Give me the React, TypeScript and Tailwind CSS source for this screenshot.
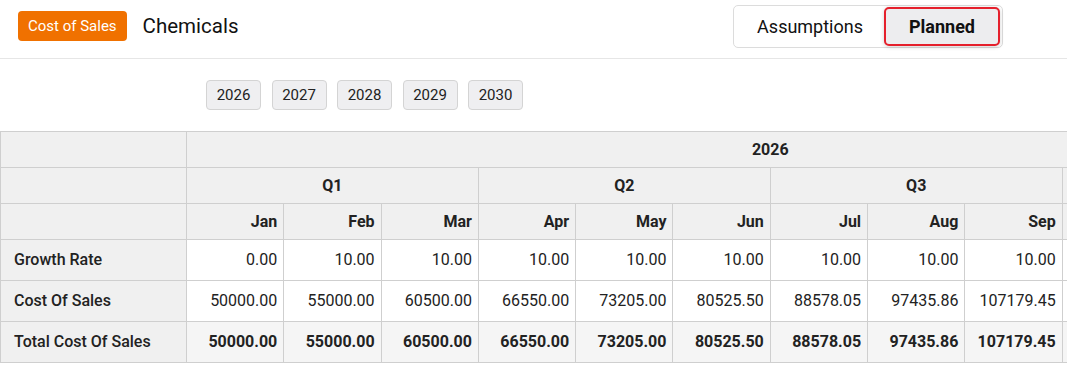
import React from "react";

const months = ["Jan", "Feb", "Mar", "Apr", "May", "Jun", "Jul", "Aug", "Sep", "Oct", "Nov", "Dec"];
const quarters = ["Q1", "Q2", "Q3", "Q4"];
const years = ["2026", "2027", "2028", "2029", "2030"];

const growth = ["0.00", "10.00", "10.00", "10.00", "10.00", "10.00", "10.00", "10.00", "10.00", "10.00", "10.00", "10.00"];
const cost = [
  "50000.00", "55000.00", "60500.00", "66550.00", "73205.00", "80525.50",
  "88578.05", "97435.86", "107179.45", "117897.40", "129687.14", "142655.85",
];

const th = "border border-[#cfcfcf] bg-[#f0f0f0] h-[36px] font-bold text-[#222]";
const labelCell = "border border-[#cfcfcf] bg-[#f0f0f0] h-[41px] pl-[13px] text-left font-medium text-[#222]";

const App = () => {
  return (
    <div className="w-[1067px] h-[379px] bg-white overflow-hidden text-[#1a1a1a]" style={{ fontFamily: "Roboto, 'Liberation Sans', sans-serif" }}>
      {/* top bar */}
      <div className="h-[59px] flex items-start justify-between pl-[18px] pr-[64px] border-b border-[#e6e6e6]">
        <div className="flex items-center gap-[16px] mt-[11px]">
          <span className="h-[30px] px-[10px] flex items-center rounded-[4px] bg-[#f07100] text-white text-[15px]">Cost of Sales</span>
          <span className="text-[20.5px] text-[#111]">Chemicals</span>
        </div>
        <div className="flex items-center h-[43px] mt-[5px] border border-[#dcdcdc] rounded-[5px] pl-[23px] pr-[2px] gap-[21px]">
          <span className="text-[18px] text-[#111]">Assumptions</span>
          <span className="h-[39px] w-[116px] flex items-center justify-center rounded-[5px] border-2 border-[#e5202c] bg-[#ededef] shadow-[0_1px_4px_rgba(0,0,0,0.18)] text-[18px] font-bold text-[#111]">Planned</span>
        </div>
      </div>

      {/* year picker */}
      <div className="h-[72px] flex items-start gap-[10.5px] pl-[206px] pt-[21px]">
        {years.map((y) => (
          <span key={y} className="h-[30px] w-[55px] flex items-center justify-center rounded-[4px] border border-[#d4d4d4] bg-[#efeff1] text-[15px] text-[#222]">
            {y}
          </span>
        ))}
      </div>

      {/* table */}
      <div className="overflow-hidden">
        <table className="table-fixed border-collapse text-[16px] w-[1354px]">
          <colgroup>
            <col className="w-[186px]" />
            {months.map((m) => (
              <col key={m} className="w-[97.3px]" />
            ))}
          </colgroup>
          <thead>
            <tr>
              <th className={th}></th>
              <th className={`${th} text-center`} colSpan={12}>2026</th>
            </tr>
            <tr>
              <th className={th}></th>
              {quarters.map((q) => (
                <th key={q} className={`${th} text-center`} colSpan={3}>{q}</th>
              ))}
            </tr>
            <tr>
              <th className={th}></th>
              {months.map((m) => (
                <th key={m} className={`${th} text-right pr-[6px]`}>{m}</th>
              ))}
            </tr>
          </thead>
          <tbody>
            <tr>
              <td className={labelCell}>Growth Rate</td>
              {growth.map((v, i) => (
                <td key={i} className="border border-[#cfcfcf] bg-white text-right pr-[6px] text-[#222]">{v}</td>
              ))}
            </tr>
            <tr>
              <td className={labelCell}>Cost Of Sales</td>
              {cost.map((v, i) => (
                <td key={i} className="border border-[#cfcfcf] bg-white text-right pr-[6px] text-[#222]">{v}</td>
              ))}
            </tr>
            <tr>
              <td className={labelCell}>Total Cost Of Sales</td>
              {cost.map((v, i) => (
                <td key={i} className="border border-[#cfcfcf] bg-[#f5f5f5] text-right pr-[6px] font-bold text-[#222]">{v}</td>
              ))}
            </tr>
          </tbody>
        </table>
      </div>
    </div>
  );
};

export default App;
